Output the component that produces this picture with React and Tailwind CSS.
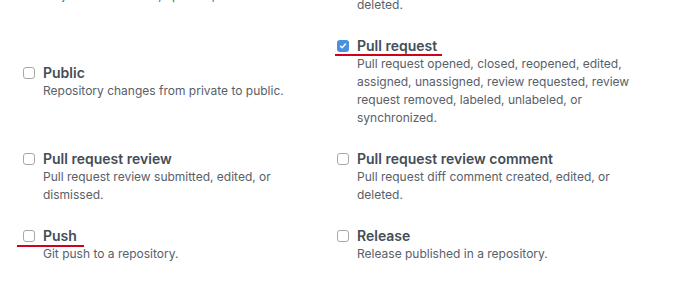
import React from 'react';

// webhook event rows; each line of the description is given so the breaks match
const rows = [
  [
    { title: 'Project card', lines: ['Project card created, updated, or deleted.'] },
    { title: 'Project column', lines: ['Project column created, updated, moved or', 'deleted.'] },
  ],
  [
    { title: 'Public', lines: ['Repository changes from private to public.'] },
    {
      title: 'Pull request',
      checked: true,
      mark: 'left-[-22px] top-[17px] w-[107px]',
      lines: [
        'Pull request opened, closed, reopened, edited,',
        'assigned, unassigned, review requested, review',
        'request removed, labeled, unlabeled, or',
        'synchronized.',
      ],
    },
  ],
  [
    { title: 'Pull request review', lines: ['Pull request review submitted, edited, or', 'dismissed.'] },
    { title: 'Pull request review comment', lines: ['Pull request diff comment created, edited, or', 'deleted.'] },
  ],
  [
    { title: 'Push', mark: 'left-[-26px] top-[18px] w-[67px]', lines: ['Git push to a repository.'] },
    { title: 'Release', lines: ['Release published in a repository.'] },
  ],
];

function Box({ checked }) {
  if (checked) {
    return (
      <span className="mt-[3px] flex h-3 w-3 shrink-0 items-center justify-center rounded-[3px] bg-[#4a90e2]">
        <svg width="8" height="8" viewBox="0 0 8 8" fill="none">
          <path d="M1.5 4.2 L3.2 5.8 L6.5 2" stroke="white" strokeWidth="1.4" strokeLinecap="round" strokeLinejoin="round" />
        </svg>
      </span>
    );
  }
  return <span className="mt-[3px] block h-3 w-3 shrink-0 rounded-[3px] border border-[#a8a8a8] bg-white" />;
}

function Event({ item }) {
  return (
    <div className="flex gap-2 leading-[18px]">
      <Box checked={item.checked} />
      <div>
        <div className="relative w-fit text-[14px] font-semibold leading-[18px] text-[#444d56]">
          {item.title}
          {item.mark && <span className={`absolute h-[2px] bg-[#d0021b] ${item.mark}`} />}
        </div>
        <div className="text-[12px] leading-[18px] text-[#586069]">
          {item.lines.map((l, i) => (
            <div key={i} className="whitespace-nowrap">{l}</div>
          ))}
        </div>
      </div>
    </div>
  );
}

export default function App() {
  return (
    <div
      className="h-[287px] w-[687px] overflow-hidden bg-white pl-[23px]"
      style={{ fontFamily: 'Inter, "Noto Sans", sans-serif' }}
    >
      <div className="-mt-[40px] flex flex-col gap-[23px]">
        {rows.map((row, i) => (
          <div key={i} className="grid grid-cols-[314px_1fr] items-center">
            <Event item={row[0]} />
            <Event item={row[1]} />
          </div>
        ))}
      </div>
    </div>
  );
}
